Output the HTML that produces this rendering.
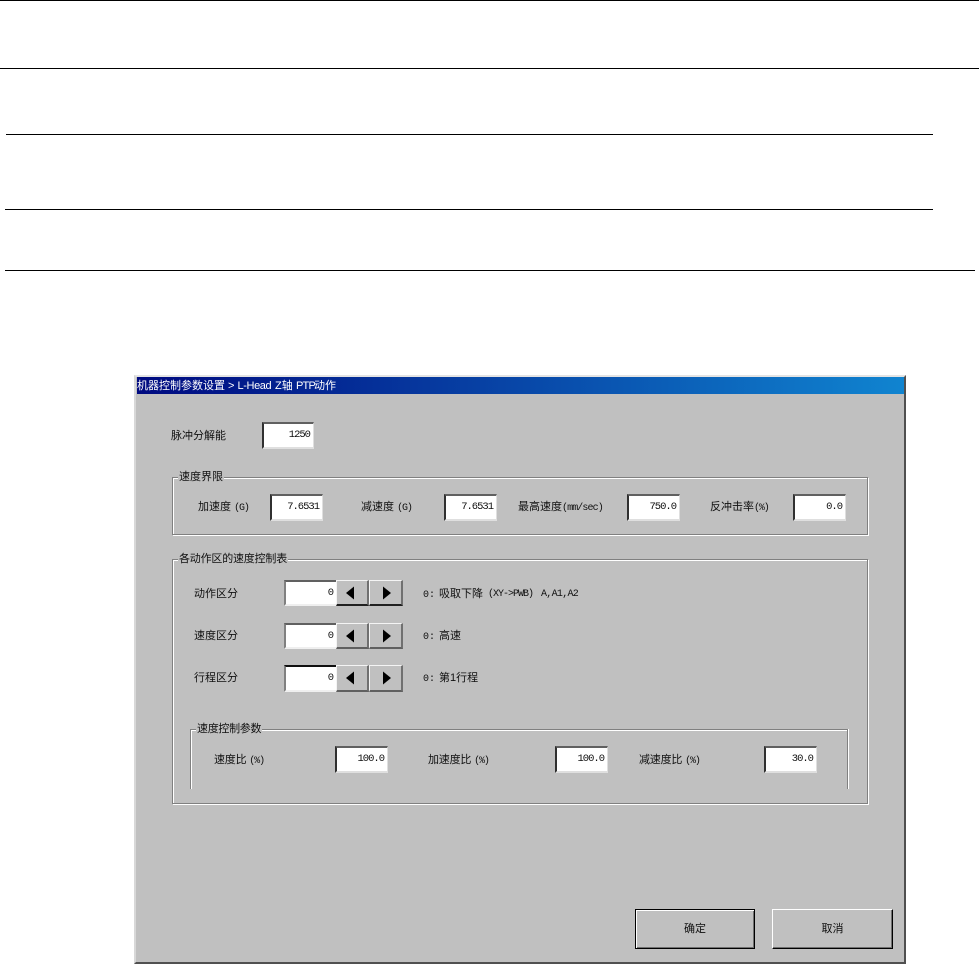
<!DOCTYPE html>
<html lang="zh">
<head>
<meta charset="utf-8">
<style>
html,body{margin:0;padding:0;background:#fff;}
body{position:relative;width:979px;height:964px;overflow:hidden;font-family:"Liberation Sans","Noto Sans CJK SC",sans-serif;}
.l{position:absolute;height:1px;background:#000;}
.b{position:absolute;box-sizing:border-box;}
#win{left:134px;top:375px;width:772px;height:589px;background:#c0c0c0;border-top:2px solid #e4e4e4;border-left:2px solid #d8d8d8;border-right:2px solid #505050;border-bottom:2px solid #505050;}
#title{left:137px;top:377px;width:767px;height:17px;background:linear-gradient(90deg,#000a80,#1084d0);}
.g{position:absolute;box-sizing:border-box;border:1px solid #808080;box-shadow:1px 1px 0 #fff,inset 1px 1px 0 #fff;}
.t{position:absolute;white-space:nowrap;font-size:11px;line-height:14px;height:14px;color:#101010;}
.w{color:#fff;}
.bg{background:#c0c0c0;padding:0 1px;}
.m{font-family:"Liberation Mono","Noto Sans CJK SC",monospace;font-size:10px;letter-spacing:-1.1px;}
.i{position:absolute;box-sizing:border-box;background:#fff;border-top:2px solid #606060;border-left:2px solid #303030;border-right:1px solid #dfdfdf;border-bottom:2px solid #dfdfdf;font:10.5px/23px "Liberation Mono",monospace;letter-spacing:-1px;color:#101010;text-align:right;padding-right:3px;}
.s{position:absolute;box-sizing:border-box;background:#fff;border-top:2px solid #606060;border-left:2px solid #808080;border-bottom:2px solid #efefef;font:10.5px/23px "Liberation Mono",monospace;color:#101010;text-align:right;padding-right:2px;}
.a{position:absolute;box-sizing:border-box;background:#c0c0c0;border-top:1px solid #f4f4f4;border-left:1px solid #f4f4f4;border-right:2px solid #707070;border-bottom:2px solid #606060;}
.a svg{position:absolute;top:5px;display:block;}
.a.lf svg{left:9px;}
.a.rt svg{left:13px;}
.btn{position:absolute;box-sizing:border-box;background:#c0c0c0;text-align:center;font-size:11px;line-height:38px;color:#101010;}
</style>
</head>
<body>
<div class="l" style="left:0;top:0;width:979px"></div>
<div class="l" style="left:0;top:68px;width:979px"></div>
<div class="l" style="left:6px;top:134px;width:927px"></div>
<div class="l" style="left:5px;top:209px;width:928px"></div>
<div class="l" style="left:5px;top:270px;width:970px"></div>

<div class="b" id="win"></div>
<div class="b" id="title"></div>
<div class="t w" style="left:137px;top:379px">机器控制参数设置 &gt; <span style="letter-spacing:-.4px">L-Head</span></div>
<div class="t w" style="left:275px;top:379px">Z轴</div>
<div class="t w" style="left:296px;top:379px;letter-spacing:-.8px">PTP</div>
<div class="t w" style="left:314px;top:379px">动作</div>

<div class="t" style="left:171px;top:429px">脉冲分解能</div>
<div class="i" style="left:262px;top:422px;width:52px;height:27px">1250</div>

<div class="g" style="left:172px;top:477px;width:696px;height:58px"></div>
<div class="t bg" style="left:178px;top:470px">速度界限</div>
<div class="t" style="left:198px;top:500px">加速度 <span class="m">(G)</span></div>
<div class="i" style="left:270px;top:494px;width:53px;height:27px">7.6531</div>
<div class="t" style="left:361px;top:500px">减速度 <span class="m">(G)</span></div>
<div class="i" style="left:444px;top:494px;width:53px;height:27px">7.6531</div>
<div class="t" style="left:518px;top:500px">最高速度<span class="m" style="letter-spacing:-.9px">(mm/sec)</span></div>
<div class="i" style="left:627px;top:494px;width:53px;height:27px">750.0</div>
<div class="t" style="left:710px;top:500px">反冲击率<span class="m">(%)</span></div>
<div class="i" style="left:793px;top:494px;width:53px;height:27px">0.0</div>

<div class="g" style="left:172px;top:559px;width:696px;height:245px"></div>
<div class="t bg" style="left:178px;top:552px;letter-spacing:-.2px">各动作区的速度控制表</div>

<div class="t" style="left:194px;top:587px">动作区分</div>
<div class="s" style="left:284px;top:580px;width:52px;height:26px">0</div>
<div class="a lf" style="left:336px;top:580px;width:33px;height:26px;border-bottom-color:#202020"><svg width="9" height="14"><path d="M0 7L8 0.5V13.5Z" fill="#000"/></svg></div>
<div class="a rt" style="left:369px;top:580px;width:34px;height:26px;border-bottom-color:#202020"><svg width="9" height="14"><path d="M8 7L0 0.5V13.5Z" fill="#000"/></svg></div>
<div class="t" style="left:423px;top:587px"><span class="m" style="display:inline-block;width:16px;letter-spacing:0">0:</span>吸取下降</div>
<div class="t m" style="left:488px;top:588px;letter-spacing:-1px">(XY-&gt;PWB)</div>
<div class="t m" style="left:541px;top:588px;letter-spacing:-.7px">A,A1,A2</div>

<div class="t" style="left:194px;top:629px">速度区分</div>
<div class="s" style="left:284px;top:623px;width:52px;height:26px">0</div>
<div class="a lf" style="left:336px;top:623px;width:33px;height:26px"><svg width="9" height="14"><path d="M0 7L8 0.5V13.5Z" fill="#000"/></svg></div>
<div class="a rt" style="left:369px;top:623px;width:34px;height:26px"><svg width="9" height="14"><path d="M8 7L0 0.5V13.5Z" fill="#000"/></svg></div>
<div class="t" style="left:423px;top:629px"><span class="m" style="display:inline-block;width:16px;letter-spacing:0">0:</span>高速</div>

<div class="t" style="left:194px;top:671px">行程区分</div>
<div class="s" style="left:284px;top:665px;width:52px;height:27px;border-top-color:#101010">0</div>
<div class="a lf" style="left:336px;top:665px;width:33px;height:27px"><svg width="9" height="14"><path d="M0 7L8 0.5V13.5Z" fill="#000"/></svg></div>
<div class="a rt" style="left:369px;top:665px;width:34px;height:27px"><svg width="9" height="14"><path d="M8 7L0 0.5V13.5Z" fill="#000"/></svg></div>
<div class="t" style="left:423px;top:671px"><span class="m" style="display:inline-block;width:16px;letter-spacing:0">0:</span>第1行程</div>

<div class="g" style="left:190px;top:729px;width:658px;height:62px;border-bottom:0;box-shadow:1px 0 0 #fff,inset 1px 1px 0 #fff"></div>
<div class="b" style="left:188px;top:789px;width:664px;height:14px;background:#c0c0c0"></div>
<div class="t bg" style="left:196px;top:722px;letter-spacing:-.3px">速度控制参数</div>
<div class="t" style="left:214px;top:753px;letter-spacing:-.2px">速度比 <span class="m">(%)</span></div>
<div class="i" style="left:335px;top:746px;width:53px;height:27px">100.0</div>
<div class="t" style="left:428px;top:753px;letter-spacing:-.2px">加速度比 <span class="m">(%)</span></div>
<div class="i" style="left:555px;top:746px;width:53px;height:27px">100.0</div>
<div class="t" style="left:639px;top:753px;letter-spacing:-.2px">减速度比 <span class="m">(%)</span></div>
<div class="i" style="left:764px;top:746px;width:53px;height:27px">30.0</div>

<div class="btn" style="left:635px;top:909px;width:120px;height:40px;border:1px solid #000;box-shadow:inset 1px 1px 0 #fff,inset -1px -1px 0 #707070">确定</div>
<div class="btn" style="left:772px;top:909px;width:121px;height:40px;border-top:1px solid #fff;border-left:1px solid #fff;border-right:1px solid #000;border-bottom:1px solid #000;box-shadow:inset -1px -1px 0 #707070">取消</div>
</body>
</html>
